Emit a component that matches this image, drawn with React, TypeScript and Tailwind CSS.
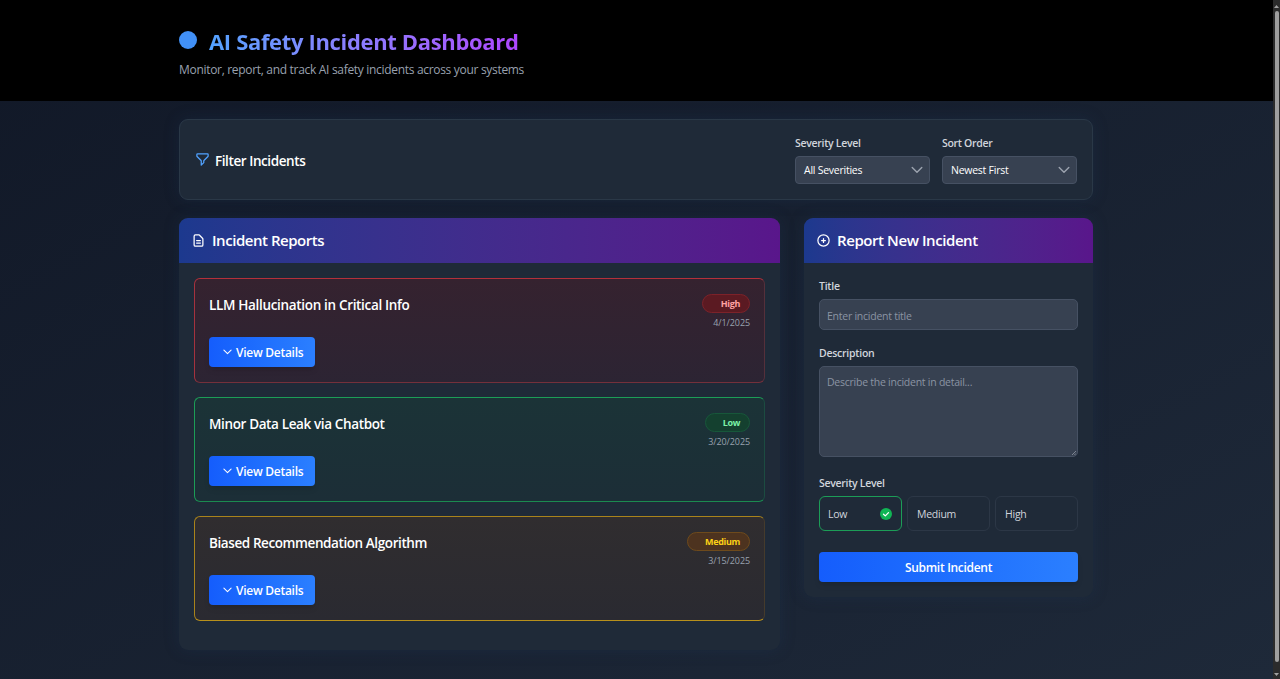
import React from "react";

const incidents = [
  {
    title: "LLM Hallucination in Critical Info",
    titleClass: "tracking-[-0.33px]",
    level: "High",
    date: "4/1/2025",
    card: "border-t-[#b4303a] border-l-[#a5323e] border-b-[#74303b] border-r-[#55303b] from-[#35222f] to-[#2c2433]",
    badge: "w-12 bg-[#5b1a22] border-[#7c2229] text-[#ffa2a2]",
  },
  {
    title: "Minor Data Leak via Chatbot",
    titleClass: "tracking-[-0.37px]",
    level: "Low",
    date: "3/20/2025",
    card: "border-t-[#1c9d57] border-l-[#1c9d57] border-b-[#1b8a50] border-r-[#1c4c41] from-[#1b3337] to-[#1c2e37]",
    badge: "w-[45px] bg-[#14402f] border-[#17573a] text-[#7bf1a8]",
  },
  {
    title: "Biased Recommendation Algorithm",
    titleClass: "tracking-[-0.41px]",
    level: "Medium",
    date: "3/15/2025",
    card: "border-t-[#a9831b] border-l-[#a9831b] border-b-[#b8901b] border-r-[#453b2c] from-[#302d2f] to-[#2a2a31]",
    badge: "w-[63px] bg-[#4d331f] border-[#6e4a1c] text-[#fcd116]",
  },
];

function Chevron({ className }: { className: string }) {
  return (
    <svg className={className} viewBox="0 0 12 8" fill="none" stroke="currentColor" strokeWidth="1.4" strokeLinecap="round" strokeLinejoin="round">
      <path d="M1.2 1.5 6 6.3l4.8-4.8" />
    </svg>
  );
}

function SelectField({ label, value }: { label: string; value: string }) {
  return (
    <label className="flex w-[135px] flex-col">
      <span className="h-[22px] whitespace-nowrap text-[10.5px] font-semibold leading-[18px] tracking-[-0.3px] text-[#d1d5dc]">{label}</span>
      <span className="flex h-7 items-center justify-between rounded-[4px] border border-[#465163] bg-[#374151] pl-2 pr-[6px] text-[10.5px] font-medium tracking-[-0.25px] text-white">
        <span className="pt-[2px]">{value}</span>
        <Chevron className="h-2 w-3 text-[#9ca3af]" />
      </span>
    </label>
  );
}

export default function App() {
  return (
    <div className="flex h-[679px] w-[1280px] overflow-hidden bg-[#121a2b] font-['Open_Sans','Noto_Sans',sans-serif] text-white">
      <div className="flex w-[1273px] flex-col bg-linear-to-br from-[#111827] to-[#1e2939]">
        <header className="h-[101px] bg-black pl-[179px] pt-[26px]">
          <div className="flex h-[30px] items-center">
            <span className="mb-[3px] size-[18px] rounded-full bg-[#4190f6]" />
            <h1 className="ml-3 whitespace-nowrap bg-linear-to-r from-[#51a2ff] to-[#ad46ff] bg-clip-text text-[22px] font-bold leading-[30px] tracking-[-0.34px] text-transparent">AI Safety Incident Dashboard</h1>
          </div>
          <p className="mt-[5px] text-[12px] leading-[18px] text-[#99a1af]">
            <span className="tracking-[-0.31px]">Monitor, report, and track AI safety incidents across your systems</span>
          </p>
        </header>

        <main className="ml-[179px] flex w-[914px] flex-col pt-[18px]">
          <section className="flex h-[81px] items-start rounded-[9px] border border-[#2a3847] bg-[#1f2a38] px-[15px] shadow-[0_0_15px_rgba(30,58,95,0.25)]">
            <svg className="mt-[32px] size-[15px] text-[#51a2ff]" viewBox="0 0 24 24" fill="none" stroke="currentColor" strokeWidth="2" strokeLinecap="round" strokeLinejoin="round">
              <path d="M3 4a1 1 0 0 1 1-1h16a1 1 0 0 1 1 1v2.586a1 1 0 0 1-.293.707l-6.414 6.414a1 1 0 0 0-.293.707V17l-4 4v-6.586a1 1 0 0 0-.293-.707L3.293 7.293A1 1 0 0 1 3 6.586V4z" />
            </svg>
            <h2 className="ml-[5px] mt-[31px] flex-1 text-[13.5px] font-semibold leading-5 tracking-[-0.42px]">Filter Incidents</h2>
            <div className="flex gap-3 pt-[14px]">
              <SelectField label="Severity Level" value="All Severities" />
              <SelectField label="Sort Order" value="Newest First" />
            </div>
          </section>

          <div className="mt-[18px] flex items-start gap-6">
            <section className="h-[432px] w-[601px] rounded-[9px] bg-[#1f2a38] shadow-[0_0_15px_rgba(30,58,95,0.25)]">
              <div className="flex h-[45px] items-center rounded-t-[9px] bg-linear-to-r from-[#1c398e] to-[#59168b] pl-3">
                <svg className="size-[15px]" viewBox="0 0 24 24" fill="none" stroke="currentColor" strokeWidth="2" strokeLinecap="round" strokeLinejoin="round">
                  <path d="M9 12h6m-6 4h6m2 5H7a2 2 0 0 1-2-2V5a2 2 0 0 1 2-2h5.586a1 1 0 0 1 .707.293l5.414 5.414a1 1 0 0 1 .293.707V19a2 2 0 0 1-2 2z" />
                </svg>
                <h2 className="ml-[6px] text-[15px] font-semibold tracking-[-0.46px]">Incident Reports</h2>
              </div>
              <div className="flex flex-col gap-[14px] px-[15px] pt-[15px]">
                {incidents.map((item) => (
                  <article key={item.title} className={`flex h-[105px] justify-between rounded-[6px] border bg-linear-to-b px-[14px] pb-[14px] pt-[15px] ${item.card}`}>
                    <div className="flex flex-col">
                      <h3 className={`h-[43px] whitespace-nowrap text-[13.5px] font-semibold leading-[23px] ${item.titleClass}`}>{item.title}</h3>
                      <button className="flex h-[30px] w-[106px] items-center rounded-[4px] bg-linear-to-r from-[#155dfc] to-[#2b7fff] pl-[14px] text-[12px] font-semibold tracking-[-0.27px] shadow-md">
                        <Chevron className="h-[6px] w-[9px]" />
                        <span className="ml-1 whitespace-nowrap pt-[2px]">View Details</span>
                      </button>
                    </div>
                    <div className="flex flex-col items-end">
                      <span className={`flex h-[19px] items-center justify-end rounded-full border pr-[9px] text-[9px] font-bold tracking-[-0.35px] ${item.badge}`}>{item.level}</span>
                      <span className="mt-[2px] text-[9px] leading-[15px] tracking-[-0.1px] text-[#99a1af]">{item.date}</span>
                    </div>
                  </article>
                ))}
              </div>
            </section>

            <section className="h-[379px] w-[289px] rounded-[9px] bg-[#1f2a38] shadow-[0_0_15px_rgba(30,58,95,0.25)]">
              <div className="flex h-[45px] items-center rounded-t-[9px] bg-linear-to-r from-[#1c398e] to-[#59168b] pl-3">
                <svg className="size-[15px]" viewBox="0 0 24 24" fill="none" stroke="currentColor" strokeWidth="2" strokeLinecap="round" strokeLinejoin="round">
                  <path d="M12 9v3m0 0v3m0-3h3m-3 0H9m12 0a9 9 0 1 1-18 0 9 9 0 0 1 18 0z" />
                </svg>
                <h2 className="ml-[6px] text-[15px] font-semibold tracking-[-0.42px]">Report New Incident</h2>
              </div>
              <form className="flex flex-col px-[15px] pt-[14px] text-[10.5px] tracking-[-0.25px]">
                <label className="h-[22px] font-semibold leading-[19px] text-[#d1d5dc]">Title</label>
                <input className="h-[31px] rounded-[5px] border border-[#465163] bg-[#374151] px-[7px] pt-[2px] tracking-[-0.25px] placeholder:text-[#8b94a3]" placeholder="Enter incident title" />
                <label className="mt-[14px] h-[22px] font-semibold leading-[19px] text-[#d1d5dc]">Description</label>
                <div className="relative flex h-[91px]">
                  <textarea className="h-full w-full resize-none rounded-[5px] border border-[#465163] bg-[#374151] px-[7px] py-[7px] leading-[16px] tracking-[-0.25px] placeholder:text-[#8b94a3]" placeholder="Describe the incident in detail..." />
                  <svg className="absolute bottom-[2px] right-[2px] size-[4px]" viewBox="0 0 4 4" stroke="#9ca3af" strokeWidth="0.7">
                    <path d="M0 4 4 0M2.4 4 4 2.4" />
                  </svg>
                </div>
                <span className="mt-[17px] h-[22px] font-semibold leading-[19px] tracking-[-0.3px] text-[#d1d5dc]">Severity Level</span>
                <div className="grid grid-cols-3 gap-[5px] text-[#d1d5dc]">
                  <div className="flex h-[35px] items-center justify-between rounded-[6px] border border-[#1c9d57] pl-2 pr-[9px]">
                    <span className="pt-[2px]">Low</span>
                    <svg className="size-3" viewBox="0 0 12 12" fill="none">
                      <circle cx="6" cy="6" r="6" fill="#10b554" />
                      <path d="m3.5 6.2 1.8 1.7 3.2-3.3" stroke="white" strokeWidth="1.3" strokeLinecap="round" strokeLinejoin="round" />
                    </svg>
                  </div>
                  <div className="flex h-[35px] items-center rounded-[6px] border border-[#2c3746] px-[9px] pt-[2px]">Medium</div>
                  <div className="flex h-[35px] items-center rounded-[6px] border border-[#2c3746] px-[9px] pt-[2px]">High</div>
                </div>
                <button type="button" className="mt-[20.5px] h-[30px] rounded-[4px] bg-linear-to-r from-[#155dfc] to-[#2b7fff] pt-[2px] text-[12px] font-semibold tracking-[-0.3px] shadow-md">Submit Incident</button>
              </form>
            </section>
          </div>
        </main>
      </div>
      <div className="flex w-[7px] flex-col items-center bg-[#2b2b2b] pt-[5px]">
        <svg className="h-[3px] w-[5px] shrink-0" viewBox="0 0 5 3"><path d="M0 3 2.5 0 5 3z" fill="#a0a0a0" /></svg>
        <div className="mt-[3px] h-[651px] w-1 shrink-0 rounded-full bg-[#9f9f9f]" />
        <svg className="mt-[11px] h-[3px] w-[5px] shrink-0" viewBox="0 0 5 3"><path d="M0 0 2.5 3 5 0z" fill="#a0a0a0" /></svg>
      </div>
    </div>
  );
}
